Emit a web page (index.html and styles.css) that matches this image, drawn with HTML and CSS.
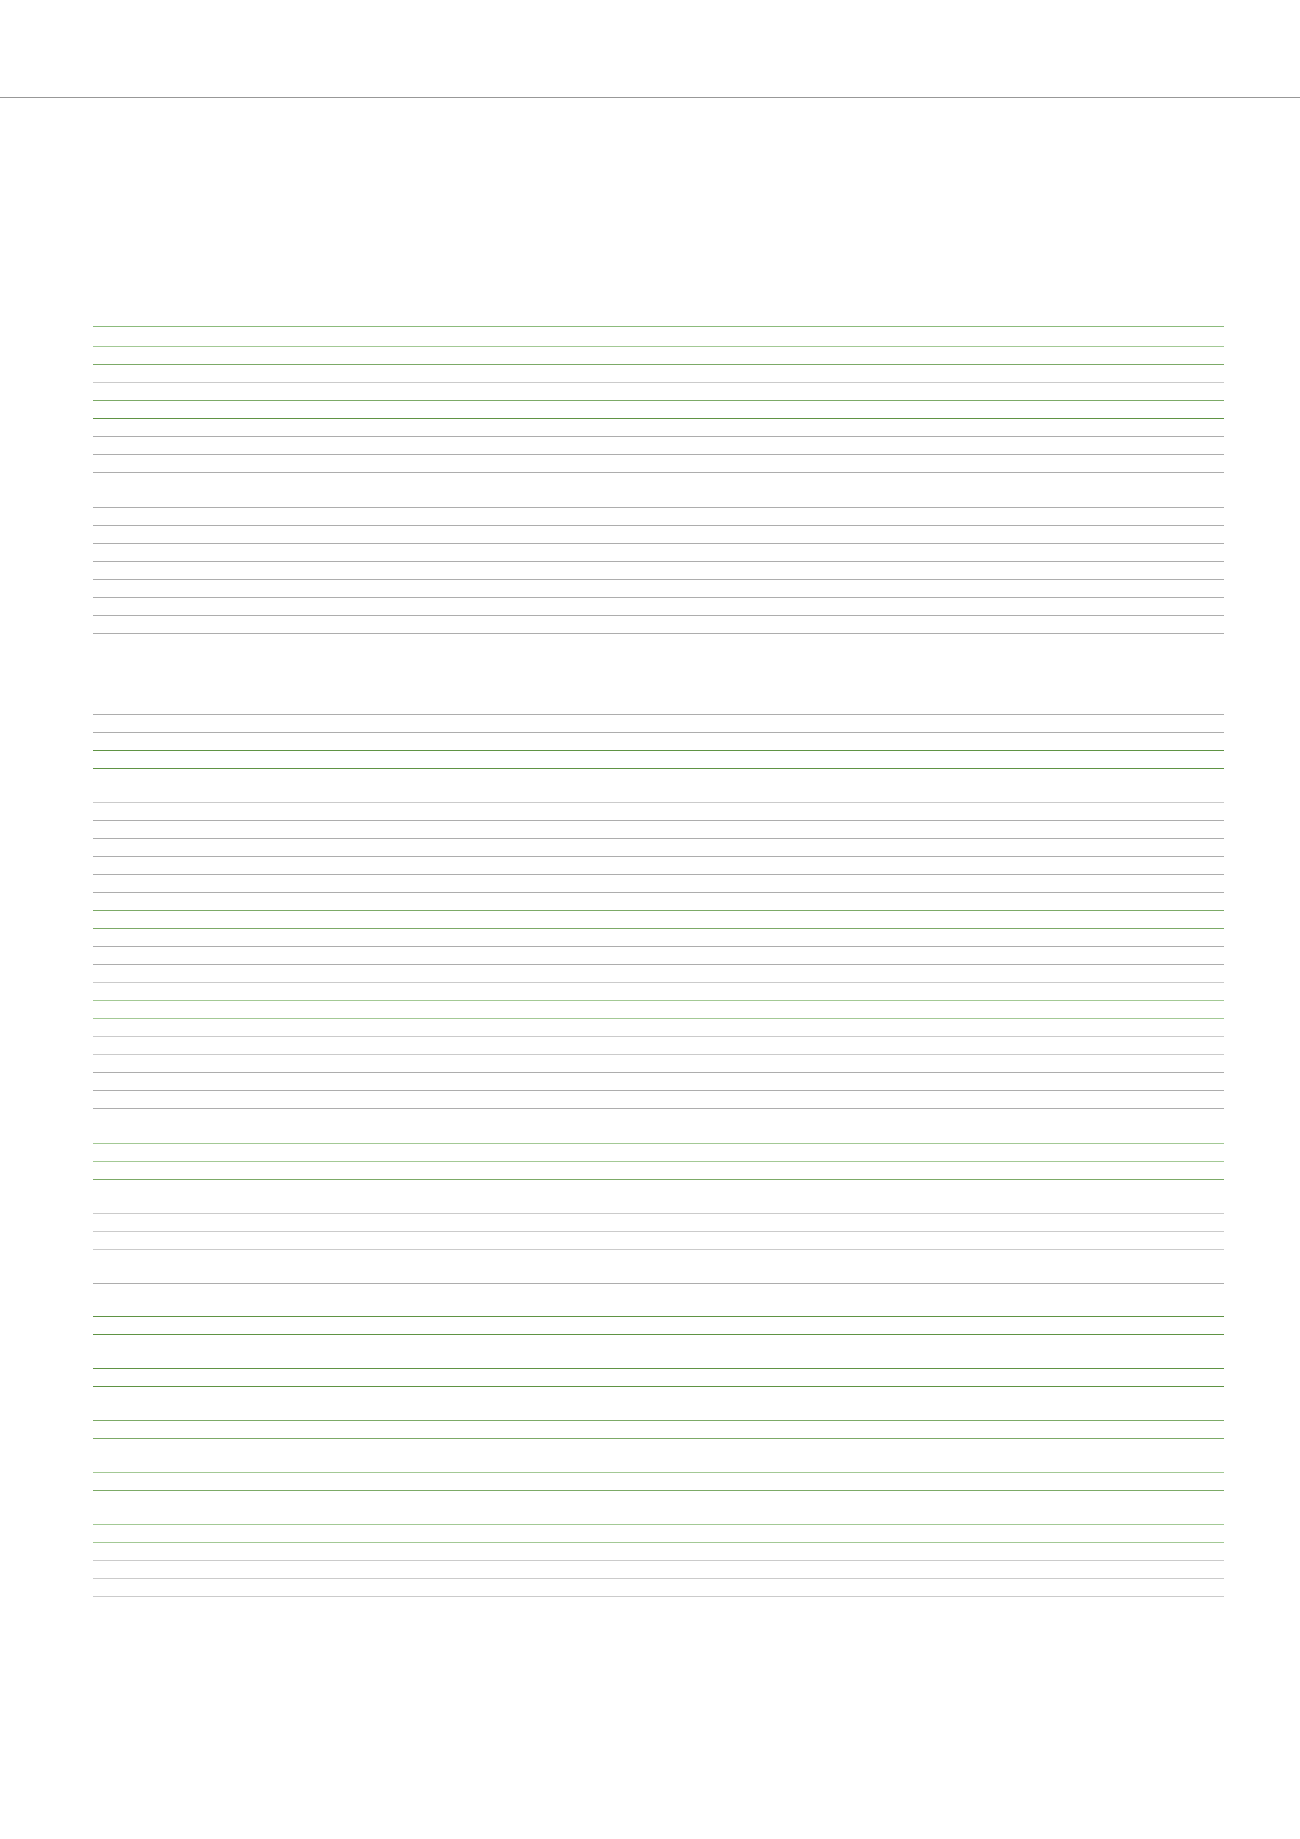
FILE: index.html
```html
<!DOCTYPE html>
<html lang="en">
<head>
<meta charset="utf-8">
<title>Sheet</title>
<link rel="stylesheet" href="styles.css">
</head>
<body>
<header class="topbar"></header>
<main class="sheet">
  <section class="group first">
    <div class="cap mg"></div>
    <div class="row tall lg"></div>
    <div class="row g"></div>
    <div class="row lgr"></div>
    <div class="row g"></div>
    <div class="row dg"></div>
    <div class="row gr"></div>
    <div class="row gr"></div>
    <div class="row gr"></div>
  </section>
  <section class="group gap17">
    <div class="row gr"></div>
    <div class="row gr"></div>
    <div class="row gr"></div>
    <div class="row gr"></div>
    <div class="row gr"></div>
    <div class="row gr"></div>
    <div class="row gr"></div>
    <div class="row gr"></div>
  </section>
  <section class="group gap63">
    <div class="row gr"></div>
    <div class="row gr"></div>
    <div class="row dg"></div>
    <div class="row dg"></div>
  </section>
  <section class="group">
    <div class="row lgr"></div>
    <div class="row gr"></div>
    <div class="row gr"></div>
    <div class="row gr"></div>
    <div class="row gr"></div>
    <div class="row gr"></div>
    <div class="row g"></div>
    <div class="row g"></div>
    <div class="row gr"></div>
    <div class="row gr"></div>
    <div class="row lgr"></div>
    <div class="row lg"></div>
    <div class="row lg"></div>
    <div class="row lgr"></div>
    <div class="row lgr"></div>
    <div class="row gr"></div>
    <div class="row gr"></div>
    <div class="row gr"></div>
  </section>
  <section class="group gap17">
    <div class="row lg"></div>
    <div class="row lg"></div>
    <div class="row g"></div>
  </section>
  <section class="group">
    <div class="row lgr"></div>
    <div class="row lgr"></div>
    <div class="row lgr"></div>
  </section>
  <section class="group">
    <div class="row gr"></div>
  </section>
  <section class="group gap15">
    <div class="row dg"></div>
    <div class="row dg"></div>
  </section>
  <section class="group">
    <div class="row dg"></div>
    <div class="row dg"></div>
  </section>
  <section class="group">
    <div class="row g"></div>
    <div class="row g"></div>
  </section>
  <section class="group">
    <div class="row lg"></div>
    <div class="row g"></div>
  </section>
  <section class="group">
    <div class="row lg"></div>
    <div class="row lg"></div>
    <div class="row lgr"></div>
    <div class="row lgr"></div>
    <div class="row lgr"></div>
  </section>
</main>
</body>
</html>
```
FILE: styles.css
```css
html, body {
  margin: 0;
  padding: 0;
  background: #ffffff;
  font-family: "Liberation Sans", Arial, sans-serif;
}

.topbar {
  height: 97px;
  border-bottom: 1px solid #989898;
}

.sheet {
  width: 1131px;
  margin-left: 93px;
  display: flex;
  flex-direction: column;
}

.group {
  display: flex;
  flex-direction: column;
  margin-top: 16px;
}

.group.first { margin-top: 228px; }
.group.gap17 { margin-top: 17px; }
.group.gap63 { margin-top: 63px; }
.group.gap15 { margin-top: 15px; }

.cap {
  height: 0;
  border-bottom: 1px solid #8cbb7c;
}

.row {
  height: 17px;
  border-bottom: 1px solid #adadad;
}

.row.tall { height: 19px; }

.mg  { border-bottom-color: #8cbb7c; }
.lg  { border-bottom-color: #a3c995; }
.g   { border-bottom-color: #7caa67; }
.dg  { border-bottom-color: #5f9344; }
.gr  { border-bottom-color: #adadad; }
.lgr { border-bottom-color: #cbcbcb; }
```
